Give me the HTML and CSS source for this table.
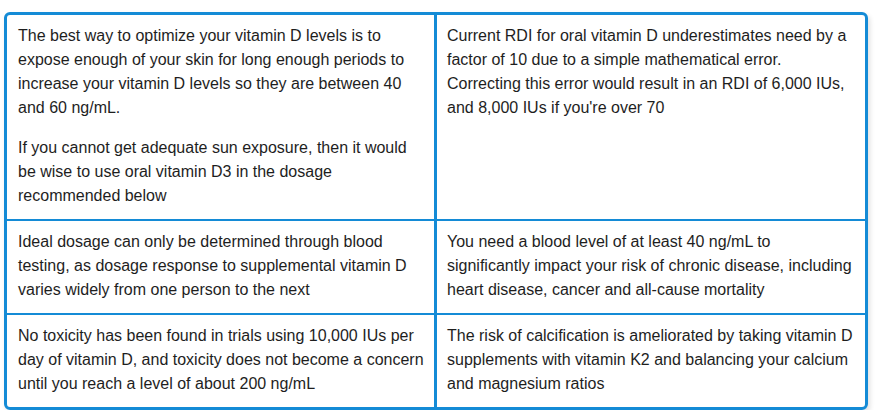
FILE: index.html
```html
<!DOCTYPE html>
<html>
<head>
<meta charset="utf-8">
<link rel="stylesheet" href="styles.css">
</head>
<body>
<div class="facts">
  <div class="cell left top">
    <p>The best way to optimize your vitamin D levels is to expose enough of your skin for long enough periods to increase your vitamin D levels so they are between 40 and 60 ng/mL.</p>
    <p>If you cannot get adequate sun exposure, then it would be wise to use oral vitamin D3 in the dosage recommended below</p>
  </div>
  <div class="cell right top">
    <p>Current RDI for oral vitamin D underestimates need by a factor of 10 due to a simple mathematical error. Correcting this error would result in an RDI of 6,000 IUs, and 8,000 IUs if you're over 70</p>
  </div>
  <div class="cell left top">
    <p>Ideal dosage can only be determined through blood testing, as dosage response to supplemental vitamin D varies widely from one person to the next</p>
  </div>
  <div class="cell right top">
    <p>You need a blood level of at least 40 ng/mL to significantly impact your risk of chronic disease, including heart disease, cancer and all-cause mortality</p>
  </div>
  <div class="cell left">
    <p>No toxicity has been found in trials using 10,000 IUs per day of vitamin D, and toxicity does not become a concern until you reach a level of about 200 ng/mL</p>
  </div>
  <div class="cell right">
    <p>The risk of calcification is ameliorated by taking vitamin D supplements with vitamin K2 and balancing your calcium and magnesium ratios</p>
  </div>
</div>
</body>
</html>
```

FILE: styles.css
```css
html, body {
  margin: 0;
  padding: 0;
  background: #ffffff;
}
body {
  padding: 12px 0 0 4px;
  font-family: "Liberation Sans", Arial, sans-serif;
  font-size: 16px;
  line-height: 24px;
  color: #1e1e1e;
}
.facts {
  width: 858px;
  display: grid;
  grid-template-columns: 430px 1fr;
  border: 3px solid #148bd6;
  border-radius: 6px;
  box-shadow: 2px 3px 5px rgba(0, 0, 0, 0.12);
}
.cell {
  padding: 9px 10px 11px 11px;
}
.cell.right {
  padding-left: 10px;
}
.cell.left {
  border-right: 3px solid #148bd6;
}
.cell.top {
  border-bottom: 2px solid #148bd6;
}
.cell p {
  margin: 0;
}
.cell p + p {
  margin-top: 16px;
}
```
